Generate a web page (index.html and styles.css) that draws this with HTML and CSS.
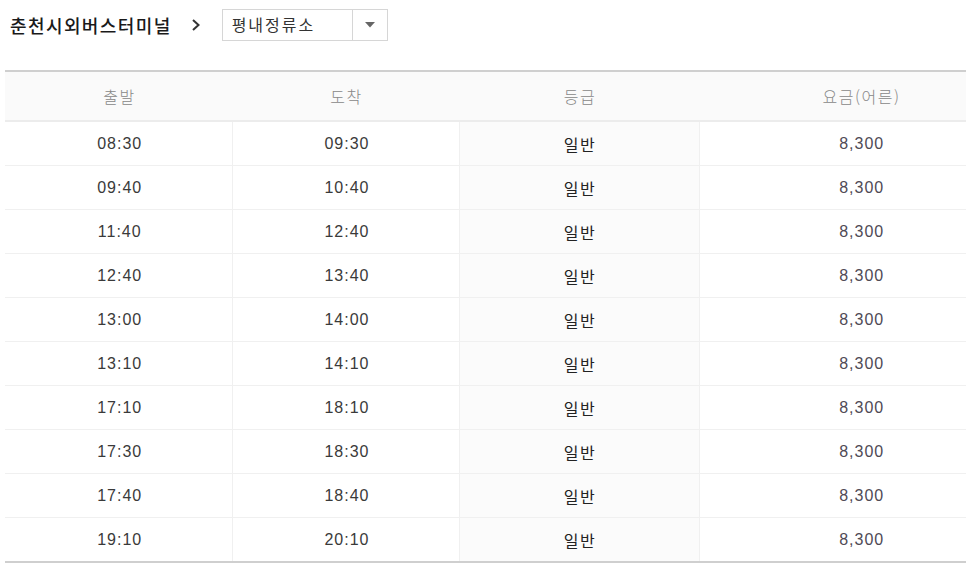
FILE: index.html
```html
<!DOCTYPE html>
<html lang="ko">
<head>
<meta charset="utf-8">
<title>시간표</title>
<link rel="stylesheet" href="styles.css">
</head>
<body>
<div class="page">
  <div class="route">
    <span class="origin">춘천시외버스터미널</span>
    <svg class="chev" width="10" height="14" viewBox="0 0 10 14"><path d="M2 2 L7.5 7 L2 12" fill="none" stroke="#333" stroke-width="2"/></svg>
    <div class="select">
      <span class="sel-text">평내정류소</span>
      <span class="sel-btn"><svg width="10" height="6" viewBox="0 0 10 6"><path d="M0 0 H10 L5 5.5 Z" fill="#666"/></svg></span>
    </div>
  </div>
  <table class="tt">
    <colgroup>
      <col class="c1"><col class="c2"><col class="c3"><col class="c4">
    </colgroup>
    <thead>
      <tr><th>출발</th><th>도착</th><th>등급</th><th class="fare-h">요금(어른)</th></tr>
    </thead>
    <tbody>
      <tr><td>08:30</td><td>09:30</td><td class="grade">일반</td><td class="fare">8,300</td></tr>
      <tr><td>09:40</td><td>10:40</td><td class="grade">일반</td><td class="fare">8,300</td></tr>
      <tr><td>11:40</td><td>12:40</td><td class="grade">일반</td><td class="fare">8,300</td></tr>
      <tr><td>12:40</td><td>13:40</td><td class="grade">일반</td><td class="fare">8,300</td></tr>
      <tr><td>13:00</td><td>14:00</td><td class="grade">일반</td><td class="fare">8,300</td></tr>
      <tr><td>13:10</td><td>14:10</td><td class="grade">일반</td><td class="fare">8,300</td></tr>
      <tr><td>17:10</td><td>18:10</td><td class="grade">일반</td><td class="fare">8,300</td></tr>
      <tr><td>17:30</td><td>18:30</td><td class="grade">일반</td><td class="fare">8,300</td></tr>
      <tr><td>17:40</td><td>18:40</td><td class="grade">일반</td><td class="fare">8,300</td></tr>
      <tr><td>19:10</td><td>20:10</td><td class="grade">일반</td><td class="fare">8,300</td></tr>
    </tbody>
  </table>
</div>
</body>
</html>
```
FILE: styles.css
```css
html, body {
  margin: 0;
  padding: 0;
  background: #fff;
  overflow: hidden;
}
body {
  font-family: "Liberation Sans", "Noto Sans CJK KR", sans-serif;
  color: #333;
}
.page {
  padding: 9px 0 0 5px;
}
.route {
  display: flex;
  align-items: center;
  height: 32px;
  padding-left: 5px;
}
.origin {
  font-family: "Noto Sans CJK KR", sans-serif;
  font-size: 18px;
  font-weight: 500;
  color: #1a1a1a;
  letter-spacing: 1.4px;
}
.chev {
  margin-left: 19px;
  margin-right: 21px;
}
.select {
  display: flex;
  width: 166px;
  height: 32px;
  border: 1px solid #d6d6d6;
  box-sizing: border-box;
}
.sel-text {
  flex: 1;
  font-family: "Noto Sans CJK KR", sans-serif;
  font-size: 16px;
  line-height: 28px;
  padding-left: 9px;
  color: #333;
  letter-spacing: 2px;
}
.sel-btn {
  width: 34px;
  border-left: 1px solid #d6d6d6;
  display: flex;
  align-items: center;
  justify-content: center;
}
.tt {
  margin-top: 29px;
  width: 961px;
  border-collapse: collapse;
  table-layout: fixed;
  border-top: 2px solid #cfcfcf;
  border-bottom: 2px solid #cfcfcf;
}
.c1 { width: 227px; }
.c2 { width: 227px; }
.c3 { width: 240px; }
.c4 { width: 267px; }
th {
  height: 48px;
  padding: 0 0 0 2px;
  background: #fafafa;
  border-bottom: 2px solid #ececec;
  font-family: "Noto Sans CJK KR", sans-serif;
  font-weight: 300;
  font-size: 16px;
  letter-spacing: 1.5px;
  color: #888;
  text-align: center;
}
th.fare-h {
  padding-left: 58px;
}
td {
  height: 43px;
  padding: 0 0 0 3px;
  font-size: 16px;
  letter-spacing: 1px;
  color: #3a3a3a;
  text-align: center;
  border-bottom: 1px solid #f0f0f0;
  border-left: 1px solid #f0f0f0;
}
td:first-child {
  border-left: none;
}
td.grade {
  background: #fbfbfb;
  font-family: "Noto Sans CJK KR", sans-serif;
  letter-spacing: 1.5px;
  padding-left: 2px;
  color: #222;
}
td.fare {
  padding-left: 58px;
  color: #4f4a55;
}
tbody tr:last-child td {
  border-bottom: 2px solid #cfcfcf;
}
```
